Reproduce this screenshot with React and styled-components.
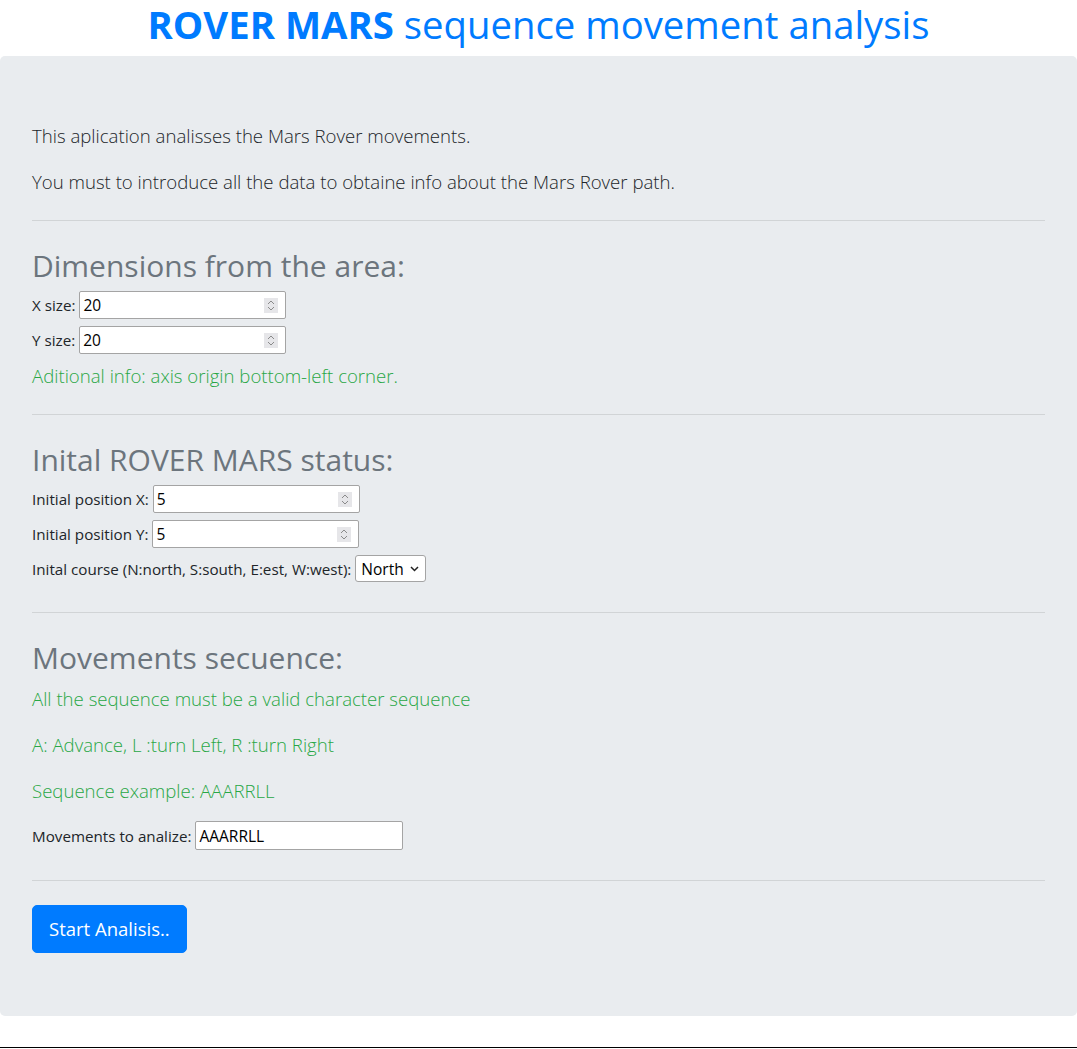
import React, { useState } from 'react';
import styled, { createGlobalStyle } from 'styled-components';

const GlobalStyle = createGlobalStyle`
  body {
    margin: 0;
    background: #fff;
    color: #212529;
    font-family: "Segoe UI", "Open Sans", "Noto Sans", Arial, sans-serif;
    font-size: 15px;
    line-height: 24px;
  }
  * { box-sizing: border-box; }
`;

const Title = styled.h1`
  margin: 0 0 8px;
  text-align: center;
  color: #007bff;
  font-size: 38.3px;
  line-height: 48px;
  font-weight: 400;

  strong { font-weight: 700; }
`;

const Jumbotron = styled.div`
  background-color: #e9ecef;
  padding: 64px 32px 63px;
  border-radius: 5px;
  margin-bottom: 31px;
`;

const Lead = styled.p`
  margin: 0 0 16px;
  padding-top: 2px;
  height: 30px;
  font-size: 18.6px;
  line-height: 28px;
  font-weight: 300;
  color: ${(p) => (p.$success ? '#28a745' : '#212529')};
`;

const Divider = styled.hr`
  margin: 24px 0;
  border: 0;
  border-top: 1px solid rgba(0, 0, 0, 0.1);
`;

const SectionTitle = styled.h2`
  margin: 0 0 8px;
  padding-top: 3px;
  height: 38px;
  font-size: 30px;
  line-height: 35px;
  font-weight: 400;
  color: #6c757d;
`;

const Fields = styled.div`
  display: flex;
  flex-direction: column;
  align-items: flex-start;
  gap: 7px;
  padding-bottom: 6px;
`;

const Row = styled.div`
  display: flex;
  align-items: center;
  gap: 4px;
`;

const Label = styled.label`
  font-size: 15.2px;
  line-height: 24px;
`;

const Box = styled.div`
  display: flex;
  align-items: center;
  width: ${(p) => p.$width || 207}px;
  height: ${(p) => p.$height || 28}px;
  background: #fff;
  border: 1px solid #a4a4a4;
  border-radius: 2px;
  padding: 0 7px 0 3px;
`;

const Field = styled.input`
  flex: 1;
  min-width: 0;
  border: 0;
  outline: none;
  background: transparent;
  font-family: inherit;
  font-size: 15.5px;
  line-height: 24px;
  color: #000;
  padding: 0;

  &::-webkit-outer-spin-button,
  &::-webkit-inner-spin-button {
    -webkit-appearance: none;
    margin: 0;
  }
  -moz-appearance: textfield;
`;

const Spinner = styled.span`
  display: flex;
  align-items: center;
  justify-content: center;
  width: 14px;
  height: 15px;
  background: #e6e6e9;
`;

const SelectBox = styled.div`
  display: flex;
  align-items: center;
  height: 27px;
  padding: 0 6px 0 5px;
  background: #fff;
  border: 1px solid #a4a4a4;
  border-radius: 3px;
  gap: 6px;
`;

const Select = styled.select`
  appearance: none;
  -webkit-appearance: none;
  border: 0;
  background: transparent;
  font-family: inherit;
  font-size: 15.5px;
  color: #000;
  padding: 0;
  outline: none;
`;

const Button = styled.button`
  background-color: #007bff;
  color: #fff;
  border: 1px solid #007bff;
  border-radius: 5px;
  padding: 8px 16px;
  font-family: inherit;
  font-size: 18.5px;
  line-height: 30px;
  cursor: pointer;
`;

const Footer = styled.div`
  border-top: 1px solid #000;
  height: 1px;
`;

const SpinIcon = () => (
  <svg width="8" height="11" viewBox="0 0 8 11" fill="none" stroke="#8a8a8a" strokeWidth="1">
    <path d="M1 4 L4 1 L7 4" />
    <path d="M1 7 L4 10 L7 7" />
  </svg>
);

const Chevron = () => (
  <svg width="9" height="6" viewBox="0 0 9 6" fill="none" stroke="#222" strokeWidth="1.5">
    <path d="M1 1 L4.5 4.5 L8 1" />
  </svg>
);

function NumberField({ label, value, onChange }) {
  return (
    <Row>
      <Label>{label}</Label>
      <Box>
        <Field type="number" value={value} onChange={(e) => onChange(e.target.value)} />
        <Spinner><SpinIcon /></Spinner>
      </Box>
    </Row>
  );
}

function App() {
  const [sizeX, setSizeX] = useState('20');
  const [sizeY, setSizeY] = useState('20');
  const [posX, setPosX] = useState('5');
  const [posY, setPosY] = useState('5');
  const [course, setCourse] = useState('N');
  const [moves, setMoves] = useState('AAARRLL');

  return (
    <>
      <GlobalStyle />
      <Title><strong>ROVER MARS</strong> sequence movement analysis</Title>
      <Jumbotron>
        <Lead>This aplication analisses the Mars Rover movements.</Lead>
        <Lead>You must to introduce all the data to obtaine info about the Mars Rover path.</Lead>
        <Divider />

        <SectionTitle>Dimensions from the area:</SectionTitle>
        <Fields>
          <NumberField label="X size:" value={sizeX} onChange={setSizeX} />
          <NumberField label="Y size:" value={sizeY} onChange={setSizeY} />
        </Fields>
        <Lead $success>Aditional info: axis origin bottom-left corner.</Lead>
        <Divider />

        <SectionTitle>Inital ROVER MARS status:</SectionTitle>
        <Fields>
          <NumberField label="Initial position X:" value={posX} onChange={setPosX} />
          <NumberField label="Initial position Y:" value={posY} onChange={setPosY} />
          <Row>
            <Label>Inital course (N:north, S:south, E:est, W:west):</Label>
            <SelectBox>
              <Select value={course} onChange={(e) => setCourse(e.target.value)}>
                <option value="N">North</option>
                <option value="S">South</option>
                <option value="E">Est</option>
                <option value="W">West</option>
              </Select>
              <Chevron />
            </SelectBox>
          </Row>
        </Fields>
        <Divider />

        <SectionTitle>Movements secuence:</SectionTitle>
        <Lead $success>All the sequence must be a valid character sequence</Lead>
        <Lead $success>A: Advance, L :turn Left, R :turn Right</Lead>
        <Lead $success>Sequence example: AAARRLL</Lead>
        <Fields>
          <Row>
            <Label>Movements to analize:</Label>
            <Box $width={208} $height={29}>
              <Field type="text" value={moves} onChange={(e) => setMoves(e.target.value)} />
            </Box>
          </Row>
        </Fields>
        <Divider />

        <Button>Start Analisis..</Button>
      </Jumbotron>
      <Footer />
    </>
  );
}

export default App;
